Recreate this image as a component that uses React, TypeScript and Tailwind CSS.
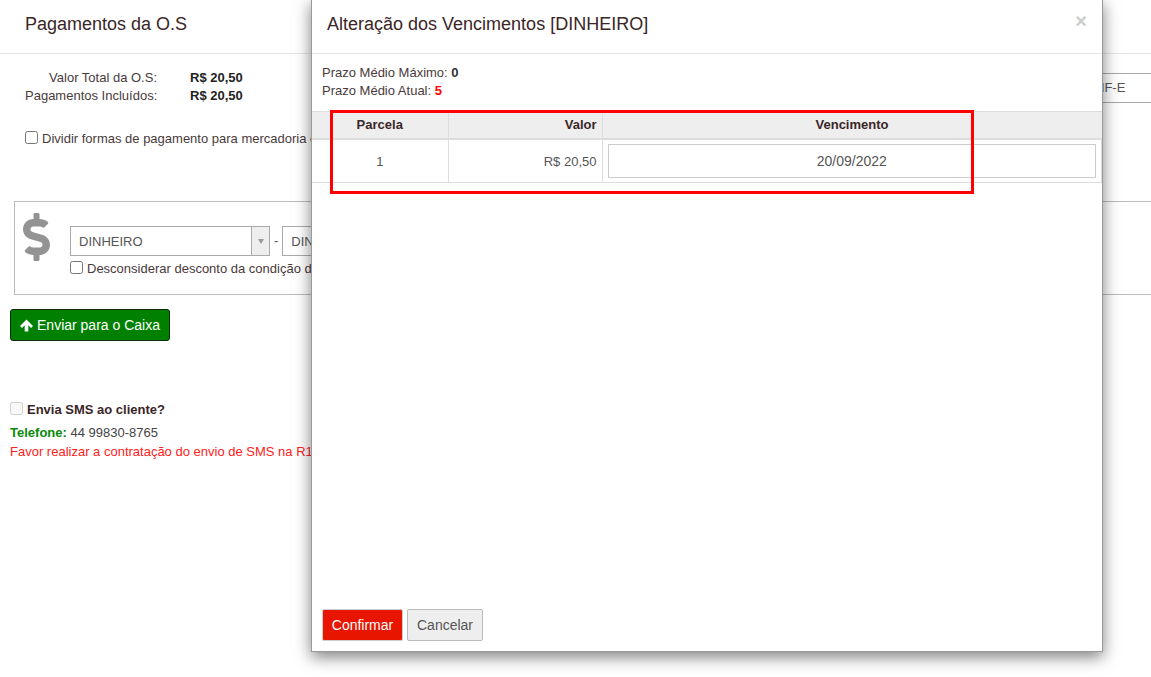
import { FaDollarSign } from "react-icons/fa";

const ink = "text-[#3a2627]";

function Background() {
  return (
    <div className="h-[677px] overflow-hidden bg-white">
      <header className="flex h-[54px] items-center border-b border-[#e5e5e5] pb-[4px] pl-[25px]">
        <h1 className={`text-[18px] ${ink}`}>Pagamentos da O.S</h1>
      </header>

      <div className="flex items-start pt-[15px]">
        <div className="pl-[25px]">
          <div className="flex h-[18px] items-center text-[13px]">
            <span className="w-[132px] text-right whitespace-nowrap text-[#4a3a3b]">Valor Total da O.S:</span>
            <b className="ml-[33px] text-[#222]">R$ 20,50</b>
          </div>
          <div className="flex h-[18px] items-center text-[13px]">
            <span className="w-[132px] text-right whitespace-nowrap text-[#4a3a3b]">Pagamentos Incluídos:</span>
            <b className="ml-[33px] text-[#222]">R$ 20,50</b>
          </div>
        </div>
        <div className="mt-[4px] ml-auto flex h-[30px] w-[60px] items-center border-y border-[#aaa] pl-[4px] text-[13px] text-[#555]">
          NF-E
        </div>
      </div>

      <label className="mt-[24px] flex h-[19px] items-center pl-[25px] text-[13px] text-[#4a3a3b]">
        <input type="checkbox" className="mr-[4px] mb-[3px] h-[13px] w-[13px]" />
        Dividir formas de pagamento para mercadoria e serviço
      </label>

      <section className="mt-[53px] ml-[14px] flex h-[94px] border border-r-0 border-[#bbb]">
        <FaDollarSign className="mt-[9px] ml-[8px] h-[52px] w-[27px] shrink-0 text-[#939393]" />
        <div className="pt-[24px] pl-[20px]">
          <div className="flex items-center">
            <div className="flex h-[30px] w-[200px] border border-[#aaa]">
              <span className="flex flex-1 items-center pt-[1px] pl-[8px] text-[13px] text-[#555]">DINHEIRO</span>
              <span className="flex w-[18px] items-center justify-center border-l border-[#aaa] bg-[#eee]">
                <span className="h-0 w-0 border-x-[3px] border-t-[5px] border-x-transparent border-t-[#999]" />
              </span>
            </div>
            <span className="mx-[4px] text-[13px] text-[#555]">-</span>
            <div className="flex h-[30px] w-[200px] items-center border border-[#aaa] pt-[1px] pl-[8px] text-[13px] text-[#555]">
              DINHEIRO
            </div>
          </div>
          <label className="mt-[3px] flex h-[19px] items-center text-[13px] text-[#4a3a3b]">
            <input type="checkbox" className="mr-[4px] mb-[3px] h-[13px] w-[13px]" />
            Desconsiderar desconto da condição de pagamento
          </label>
        </div>
      </section>

      <button className="mt-[14px] ml-[10px] flex h-[32px] w-[160px] items-center justify-center gap-[4px] rounded-[3px] border border-[#0a2a0a] bg-[#008000] text-[14px] text-white">
        <svg viewBox="0 0 13 13" className="h-[13px] w-[13px] fill-white">
          <path d="M6.5 0.5 L13 7 L11 9 L8.3 6.3 V12.5 H4.7 V6.3 L2 9 L0 7 Z" />
        </svg>
        Enviar para o Caixa
      </button>

      <label className="mt-[59px] ml-[10px] flex h-[19px] items-center text-[13px] font-bold text-[#3a2627]">
        <input type="checkbox" disabled className="mr-[4px] mb-[2px] h-[13px] w-[13px]" />
        Envia SMS ao cliente?
      </label>
      <p className="mt-[4px] ml-[10px] h-[19px] text-[13px] text-[#444]">
        <b className="text-[#0a8a0a]">Telefone:</b> 44 99830-8765
      </p>
      <p className="ml-[10px] text-[13px] whitespace-nowrap text-[#ff2020]">
        Favor realizar a contratação do envio de SMS na R1 Sistemas
      </p>
    </div>
  );
}

function Modal() {
  return (
    <div className="absolute top-[-1px] left-[311px] flex h-[653px] w-[792px] flex-col border border-[#999] bg-white shadow-[0_5px_15px_rgba(0,0,0,0.5)]">
      <div className="flex h-[54px] shrink-0 items-center justify-between border-b border-[#e5e5e5] px-[15px] pb-[4px]">
        <h2 className={`text-[18px] ${ink}`}>Alteração dos Vencimentos [DINHEIRO]</h2>
        <span className="mb-[8px] text-[20px] leading-none font-bold text-[#ccc]">×</span>
      </div>

      <div className="pt-[10px] pl-[10px] text-[13px] text-[#4a3a3b]">
        <div className="h-[18px] leading-[18px]">
          Prazo Médio Máximo: <b className="text-[#333]">0</b>
        </div>
        <div className="h-[18px] leading-[18px]">
          Prazo Médio Atual: <b className="text-[#f00]">5</b>
        </div>
      </div>

      <table className="mt-[11px] w-full table-fixed border-collapse text-[13px]">
        <thead>
          <tr className="h-[27px] border-y border-[#ddd] bg-[#eee] text-[#3a2627]">
            <th className="w-[136px] border-r border-[#ddd] font-bold">Parcela</th>
            <th className="w-[154px] border-r border-[#ddd] pr-[5px] text-right font-bold">Valor</th>
            <th className="font-bold">Vencimento</th>
          </tr>
        </thead>
        <tbody>
          <tr className="h-[44px] border-t-2 border-b border-[#ddd] text-[#555]">
            <td className="border-r border-[#ddd] pt-[1px] text-center">1</td>
            <td className="border-r border-[#ddd] pt-[1px] pr-[5px] text-right">R$ 20,50</td>
            <td className="border-r border-[#ddd] px-[5px]">
              <div className="flex h-[34px] items-center justify-center border border-[#ccc] pt-[1px] text-[14px]">20/09/2022</div>
            </td>
          </tr>
        </tbody>
      </table>

      <div className="mt-auto flex gap-[4px] pb-[10px] pl-[10px]">
        <button className="h-[32px] w-[81px] rounded-[2px] border border-[#ccc] bg-[#e81500] text-[14px] text-white">
          Confirmar
        </button>
        <button className="h-[32px] w-[76px] rounded-[2px] border border-[#bbb] bg-[#eee] text-[14px] text-[#555]">
          Cancelar
        </button>
      </div>
    </div>
  );
}

export default function App() {
  return (
    <div className="relative h-[677px] overflow-hidden font-['Liberation_Sans',Arial,sans-serif]">
      <Background />
      <Modal />
      {/* marcação vermelha por cima da tabela */}
      <div className="absolute top-[110px] left-[330px] h-[84px] w-[644px] border-[3px] border-[#f00]" />
    </div>
  );
}
